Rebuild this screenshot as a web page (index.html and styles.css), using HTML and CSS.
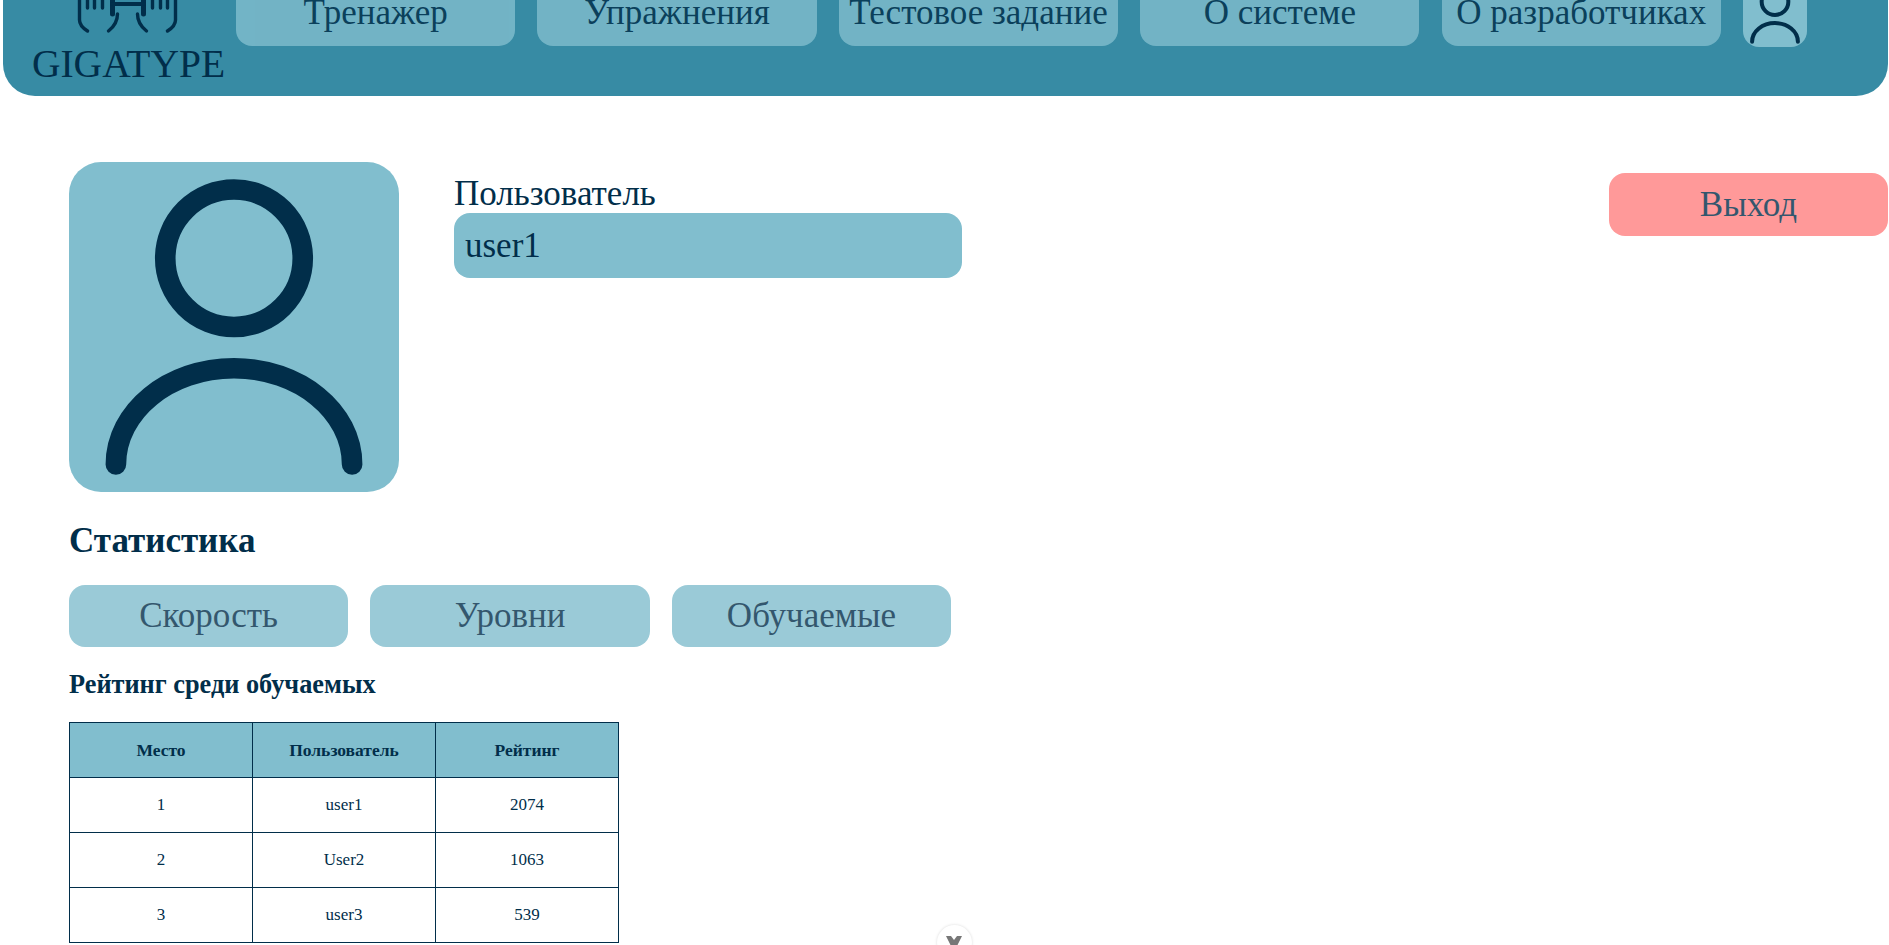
FILE: index.html
```html
<!DOCTYPE html>
<html lang="ru">
<head>
  <meta charset="UTF-8">
  <title>GIGATYPE</title>
  <link rel="stylesheet" href="styles.css">
</head>
<body>
  <header class="header">
    <div class="logo">
      <svg class="logo-icon" viewBox="69.5 -32 120 73" fill="none" stroke="#012E4A" stroke-width="3.4" stroke-linecap="round" stroke-linejoin="round">
        <path d="M80 -20V20Q80 26 88 31"/>
        <path d="M176 -20V20Q176 26 168 31"/>
        <path d="M88 -10V8M95 -10V8M103 -10V8M153 -10V8M161 -10V8M168 -10V8"/>
        <path d="M113 -10V14M144 -10V14" stroke-width="5"/>
        <path d="M113 4H144" stroke-width="4"/>
        <path d="M118 14Q118 24 109 31M138 14Q138 24 147 31"/>
      </svg>
      <span class="logo-text">GIGATYPE</span>
    </div>
    <nav class="nav">
      <a class="nav-btn">Тренажер</a>
      <a class="nav-btn">Упражнения</a>
      <a class="nav-btn">Тестовое задание</a>
      <a class="nav-btn">О системе</a>
      <a class="nav-btn">О разработчиках</a>
      <a class="nav-user">
        <svg viewBox="0 0 24 24" fill="none" stroke="#012E4A" stroke-width="1.5" stroke-linecap="round">
          <circle cx="12" cy="7" r="5"/>
          <path d="M20.59 22c0-3.87-3.85-7-8.59-7s-8.59 3.13-8.59 7"/>
        </svg>
      </a>
    </nav>
  </header>

  <main class="content">
    <section class="profile">
      <div class="avatar">
        <svg viewBox="0 0 24 24" fill="none" stroke="#012E4A" stroke-width="1.5" stroke-linecap="round">
          <circle cx="12" cy="7" r="5"/>
          <path d="M20.59 22c0-3.87-3.85-7-8.59-7s-8.59 3.13-8.59 7"/>
        </svg>
      </div>
      <div class="user-info">
        <div class="user-label">Пользователь</div>
        <div class="user-field">user1</div>
      </div>
      <a class="logout">Выход</a>
    </section>

    <h2 class="stats-title">Статистика</h2>
    <div class="tabs">
      <a class="tab">Скорость</a>
      <a class="tab">Уровни</a>
      <a class="tab">Обучаемые</a>
    </div>

    <h3 class="rating-title">Рейтинг среди обучаемых</h3>
    <table class="rating">
      <tr><th>Место</th><th>Пользователь</th><th>Рейтинг</th></tr>
      <tr><td>1</td><td>user1</td><td>2074</td></tr>
      <tr><td>2</td><td>User2</td><td>1063</td></tr>
      <tr><td>3</td><td>user3</td><td>539</td></tr>
    </table>
  </main>

  <div class="scroll-down">
    <svg viewBox="0 0 18 16" fill="#777">
      <path d="M1 1H6L9 5L12 1H17L10 15H8Z"/>
    </svg>
  </div>
</body>
</html>
```

FILE: styles.css
```css
html, body {
  height: 945px;
  overflow: hidden;
}
body {
  margin: 0;
  background: #fff;
  color: #012E4A;
  font-family: "Liberation Serif", serif;
}

/* шапка прокручена вверх, поэтому верх обрезан */
.header {
  display: flex;
  height: 136px;
  margin: -40px 1px 0 3px;
  padding-left: 28px;
  box-sizing: border-box;
  background: #378BA4;
  border-radius: 0 0 32px 32px;
}
.logo {
  display: flex;
  flex-direction: column;
  align-items: center;
  width: 195px;
}
.logo-icon {
  width: 120px;
  height: 73px;
  margin-top: 8px;
  flex: none;
}
.logo-text {
  font-size: 39.5px;
  line-height: 46px;
  white-space: nowrap;
}
.nav {
  display: flex;
  align-items: flex-start;
  gap: 22.1px;
  margin-left: 10px;
}
.nav-btn {
  display: flex;
  align-items: flex-end;
  justify-content: center;
  box-sizing: border-box;
  width: 279.3px;
  height: 86px;
  padding-bottom: 13px;
  background: #81BECE;
  border-radius: 16px;
  font-size: 35px;
  line-height: 40px;
  opacity: 0.8;
  white-space: nowrap;
}
.nav-user {
  width: 64px;
  height: 87px;
  background: #81BECE;
  border-radius: 16px;
  overflow: hidden;
}
.nav-user svg {
  display: block;
  width: 64px;
  height: 64px;
  margin-top: 23px;
}

.content {
  padding: 66px 1px 0 69px;
}
.profile {
  display: flex;
  align-items: flex-start;
}
.avatar {
  width: 330px;
  height: 330px;
  background: #81BECE;
  border-radius: 32px;
}
.avatar svg {
  display: block;
  width: 330px;
  height: 330px;
}
.user-info {
  width: 508px;
  margin-left: 55px;
  padding-top: 12px;
}
.user-label {
  font-size: 35px;
  line-height: 39px;
}
.user-field {
  height: 65px;
  padding-left: 11px;
  background: #81BECE;
  border-radius: 16px;
  font-size: 35px;
  line-height: 65px;
}
.logout {
  width: 279px;
  height: 63px;
  margin: 11px 0 0 auto;
  background: #ff8080;
  border-radius: 16px;
  font-size: 35px;
  line-height: 63px;
  text-align: center;
  opacity: 0.8;
}

.stats-title {
  margin: 29px 0 0;
  font-size: 35px;
  line-height: 40px;
}
.tabs {
  display: flex;
  gap: 22.1px;
  margin-top: 24px;
}
.tab {
  width: 279.3px;
  height: 62px;
  background: #81BECE;
  border-radius: 16px;
  font-size: 35px;
  line-height: 62px;
  text-align: center;
  opacity: 0.8;
}
.rating-title {
  margin: 23px 0 0;
  font-size: 26.3px;
  line-height: 30px;
}
.rating {
  width: 550px;
  margin-top: 22px;
  border-collapse: collapse;
  table-layout: fixed;
  font-size: 17px;
  text-align: center;
}
.rating tr {
  height: 55px;
}
.rating th, .rating td {
  border: 1px solid #012E4A;
  padding: 0;
}
.rating th {
  background: #81BECE;
  font-size: 17.5px;
}

.scroll-down {
  position: absolute;
  left: 937px;
  top: 925px;
  width: 35px;
  height: 35px;
  background: #fff;
  border-radius: 50%;
  box-shadow: 0 0 3px rgba(0, 0, 0, 0.15);
}
.scroll-down svg {
  position: absolute;
  left: 8px;
  top: 10px;
  width: 18px;
  height: 16px;
}
```
